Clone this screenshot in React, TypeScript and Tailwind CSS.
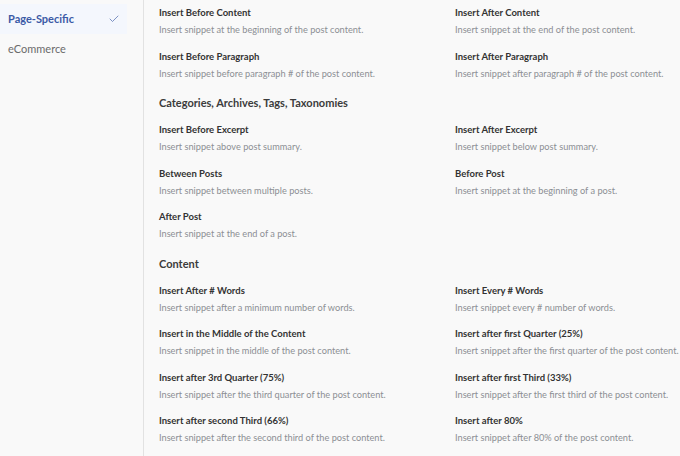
import { Check } from "lucide-react";

type Item = { title: string; desc: string };

const sections: { heading?: string; items: Item[] }[] = [
  {
    items: [
      { title: "Insert Before Content", desc: "Insert snippet at the beginning of the post content." },
      { title: "Insert After Content", desc: "Insert snippet at the end of the post content." },
      { title: "Insert Before Paragraph", desc: "Insert snippet before paragraph # of the post content." },
      { title: "Insert After Paragraph", desc: "Insert snippet after paragraph # of the post content." },
    ],
  },
  {
    heading: "Categories, Archives, Tags, Taxonomies",
    items: [
      { title: "Insert Before Excerpt", desc: "Insert snippet above post summary." },
      { title: "Insert After Excerpt", desc: "Insert snippet below post summary." },
      { title: "Between Posts", desc: "Insert snippet between multiple posts." },
      { title: "Before Post", desc: "Insert snippet at the beginning of a post." },
      { title: "After Post", desc: "Insert snippet at the end of a post." },
    ],
  },
  {
    heading: "Content",
    items: [
      { title: "Insert After # Words", desc: "Insert snippet after a minimum number of words." },
      { title: "Insert Every # Words", desc: "Insert snippet every # number of words." },
      { title: "Insert in the Middle of the Content", desc: "Insert snippet in the middle of the post content." },
      { title: "Insert after first Quarter (25%)", desc: "Insert snippet after the first quarter of the post content." },
      { title: "Insert after 3rd Quarter (75%)", desc: "Insert snippet after the third quarter of the post content." },
      { title: "Insert after first Third (33%)", desc: "Insert snippet after the first third of the post content." },
      { title: "Insert after second Third (66%)", desc: "Insert snippet after the second third of the post content." },
      { title: "Insert after 80%", desc: "Insert snippet after 80% of the post content." },
    ],
  },
];

export default function App() {
  return (
    <div
      className="flex w-[680px] h-[456px] overflow-hidden bg-[#f9f9f9]"
      style={{ fontFamily: 'Lato, "Open Sans", sans-serif' }}
    >
      {/* Sidebar */}
      <aside className="w-[144px] shrink-0 border-r border-[#e2e2e2] pt-[4px] pr-[16px]">
        <div className="flex items-center justify-between h-[30px] pl-[8px] pr-[7px] bg-[#f4f7fd]">
          <span className="text-[11px] font-bold text-[#3b5aa6]">Page-Specific</span>
          <Check className="w-[12px] h-[12px] text-[#5670b0]" strokeWidth={1.5} />
        </div>
        <div className="flex items-center h-[30px] pl-[8px]">
          <span className="text-[11px] text-[#6b6b6b]">eCommerce</span>
        </div>
      </aside>

      {/* Main */}
      <main className="flex-1 pl-[15px] pt-[5px]">
        {sections.map((s, i) => (
          <div key={i} className={s.heading ? "mt-[13px]" : ""}>
            {s.heading && (
              <h3 className="text-[11px] font-bold text-[#3c3c3c] leading-[16px] mb-[11px] whitespace-nowrap">
                {s.heading}
              </h3>
            )}
            <div className="grid grid-cols-[296px_1fr] gap-y-[10px]">
              {s.items.map((it) => (
                <div key={it.title} className="whitespace-nowrap">
                  <div className="text-[9.5px] font-bold text-[#333] leading-[16px]">{it.title}</div>
                  <div className="text-[9.2px] text-[#8c8f94] leading-[17.5px]">{it.desc}</div>
                </div>
              ))}
            </div>
          </div>
        ))}
      </main>
    </div>
  );
}
